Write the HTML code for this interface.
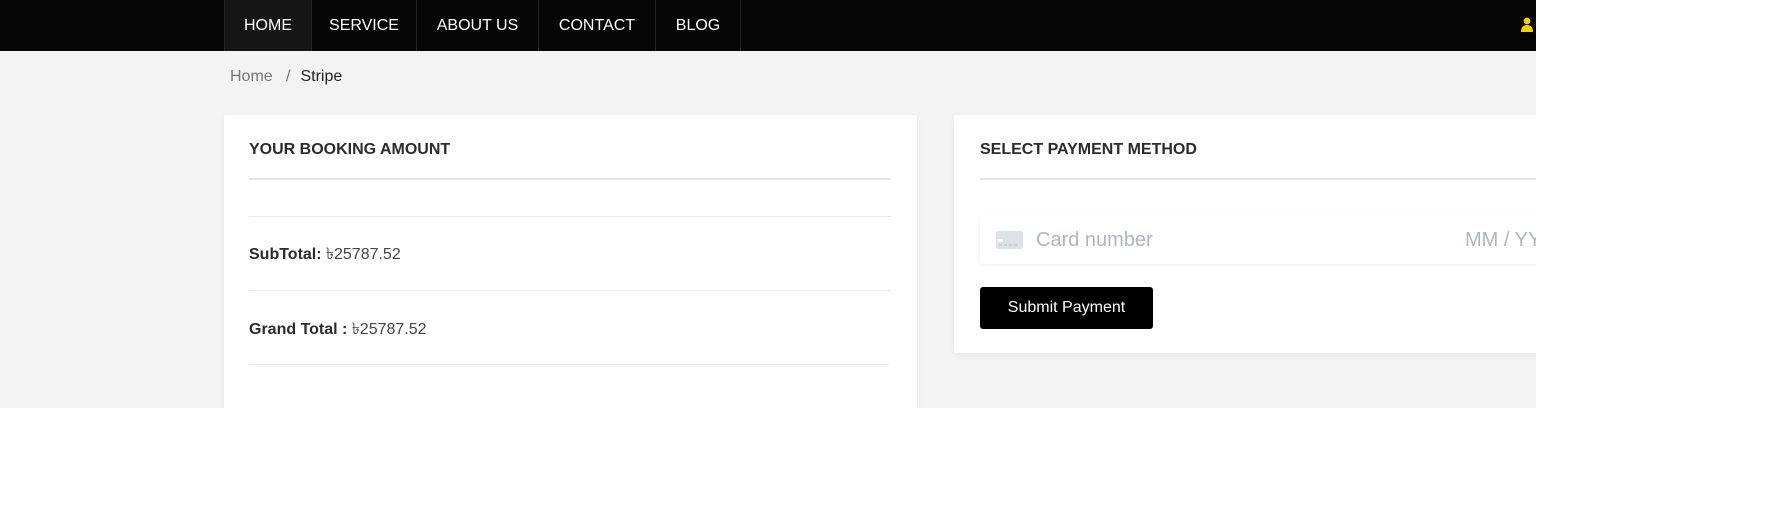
<!DOCTYPE html>
<html><head><meta charset="utf-8"><style>
*{margin:0;padding:0;box-sizing:border-box}
body{width:1791px;height:511px;background:#fff;font-family:"Liberation Sans","DejaVu Sans",sans-serif;overflow:hidden}
#wrap{position:absolute;left:0;top:0;width:1536px;height:408px;background:#f3f3f3;overflow:hidden}
#nav{position:absolute;left:0;top:0;width:1536px;height:51px;background:#050505}
.ni{position:absolute;top:0;height:51px;line-height:51px;color:#fff;font-size:16px;text-align:center;border-right:1px solid #222}
#bc{position:absolute;top:68px;left:230px;font-size:16px;color:#777}
#bc b{font-weight:normal;color:#222;margin-left:10px}
.card{position:absolute;background:#fff;box-shadow:0 2px 6px rgba(0,0,0,.06)}
h3{position:absolute;font-size:16px;font-weight:bold;color:#2b2b2b;top:26px}
.ln{position:absolute;height:1px;background:#ebebeb}
.row{position:absolute;font-size:16px;color:#444}
.row b{color:#2b2b2b}
</style></head><body>
<div id="wrap">
<div id="nav">
<div class="ni" style="left:224px;width:88px;background:#161616;border-left:1px solid #222">HOME</div>
<div class="ni" style="left:312px;width:105px">SERVICE</div>
<div class="ni" style="left:417px;width:122px">ABOUT US</div>
<div class="ni" style="left:539px;width:117px">CONTACT</div>
<div class="ni" style="left:656px;width:85px">BLOG</div>
<svg style="position:absolute;left:1520px;top:17px" width="16" height="16" viewBox="0 0 16 16"><circle cx="7" cy="4" r="3.4" fill="#f5d100"/><path d="M1 15c0-5 2.5-7 6-7s6 2 6 7z" fill="#f5d100"/></svg>
</div>
<div id="bc">Home &nbsp;&nbsp;/<b>Stripe</b></div>

<div class="card" style="left:224px;top:115px;width:693px;height:320px">
<h3 style="left:25px">YOUR BOOKING AMOUNT</h3>
<div class="ln" style="left:25px;width:642px;top:63px;height:2px;background:#e6e6e6"></div>
<div class="ln" style="left:25px;width:642px;top:101px"></div>
<div class="row" style="left:25px;top:126px"><b>SubTotal:</b> ৳25787.52</div>
<div class="ln" style="left:25px;width:642px;top:175px"></div>
<div class="row" style="left:25px;top:201px"><b>Grand Total :</b> ৳25787.52</div>
<div class="ln" style="left:25px;width:642px;top:249px"></div>
</div>

<div class="card" style="left:954px;top:115px;width:700px;height:238px">
<h3 style="left:26px">SELECT PAYMENT METHOD</h3>
<div class="ln" style="left:26px;width:700px;top:63px;height:2px;background:#e6e6e6"></div>
<div style="position:absolute;left:26px;top:99px;width:700px;height:50px;border-radius:4px;box-shadow:0 1px 3px rgba(0,0,0,.08);background:#fff">
<svg style="position:absolute;left:16px;top:17px" width="27" height="18" viewBox="0 0 27 18"><rect width="27" height="18" rx="2" fill="#dde1e8"/><rect x="2" y="8" width="5" height="3" fill="#fff"/><path d="M3 14h3M8 14h3M13 14h3M18 14h3" stroke="#b7bcc6" stroke-width="1"/></svg>
<span style="position:absolute;left:56px;top:15px;font-size:20px;color:#aab7c4">Card number</span>
<span style="position:absolute;left:485px;top:15px;font-size:20px;color:#aab7c4">MM / YY</span>
</div>
<div style="position:absolute;left:26px;top:172px;width:173px;height:42px;background:#000;border-radius:3px;color:#fff;font-size:16px;line-height:42px;text-align:center">Submit Payment</div>
</div>
</div>
</body></html>
